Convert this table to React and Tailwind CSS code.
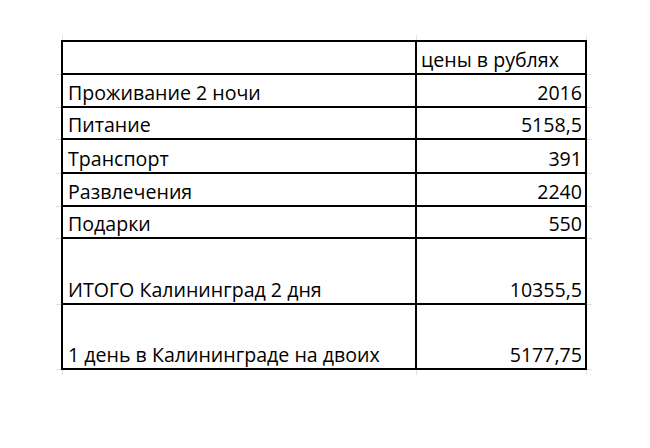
const rows = [
  { label: 'Проживание 2 ночи', value: '2016', h: 'h-[33px]' },
  { label: 'Питание', value: '5158,5', h: 'h-[32px]' },
  { label: 'Транспорт', value: '391', h: 'h-[34px]' },
  { label: 'Развлечения', value: '2240', h: 'h-[33px]' },
  { label: 'Подарки', value: '550', h: 'h-[32px]' },
  { label: 'ИТОГО Калининград 2 дня', value: '10355,5', h: 'h-[66px]' },
  { label: '1 день в Калининграде на двоих', value: '5177,75', h: 'h-[65px]' },
];

const stub = 'p-0 border-[#e2e2e2]';

export default function App() {
  return (
    <div className="w-[650px] h-[448px] bg-white pt-[35px] pl-[56px] font-['Open_Sans',sans-serif] text-[19.6px] text-black">
      <table className="border-collapse">
        <tbody>
          <tr className="h-[6px]">
            <td className={`${stub} w-[6px] border-r`}></td>
            <td className={`${stub} border-r`}></td>
            <td className={`${stub} border-r`}></td>
            <td className={`${stub} w-[6px]`}></td>
          </tr>
          <tr className="h-[33px]">
            <td className={`${stub} border-b`}></td>
            <td className="w-[354px] border-2 border-black p-0"></td>
            <td className="w-[170px] border-2 border-black p-0 align-bottom">
              <div className="pl-[4px] pb-[1px] leading-[24px] whitespace-nowrap">цены в рублях</div>
            </td>
            <td className={`${stub} border-b`}></td>
          </tr>
          {rows.map((r) => (
            <tr key={r.label} className={r.h}>
              <td className={`${stub} border-b`}></td>
              <td className="border-2 border-black p-0 align-bottom">
                <div className="pl-[5px] pb-[1px] leading-[24px] whitespace-nowrap">{r.label}</div>
              </td>
              <td className="border-2 border-black p-0 align-bottom">
                <div className="pr-[3px] pb-[1px] leading-[24px] text-right">{r.value}</div>
              </td>
              <td className={`${stub} border-b`}></td>
            </tr>
          ))}
          <tr className="h-[6px]">
            <td className={`${stub} border-r`}></td>
            <td className={`${stub} border-r`}></td>
            <td className={`${stub} border-r`}></td>
            <td className={stub}></td>
          </tr>
        </tbody>
      </table>
    </div>
  );
}
